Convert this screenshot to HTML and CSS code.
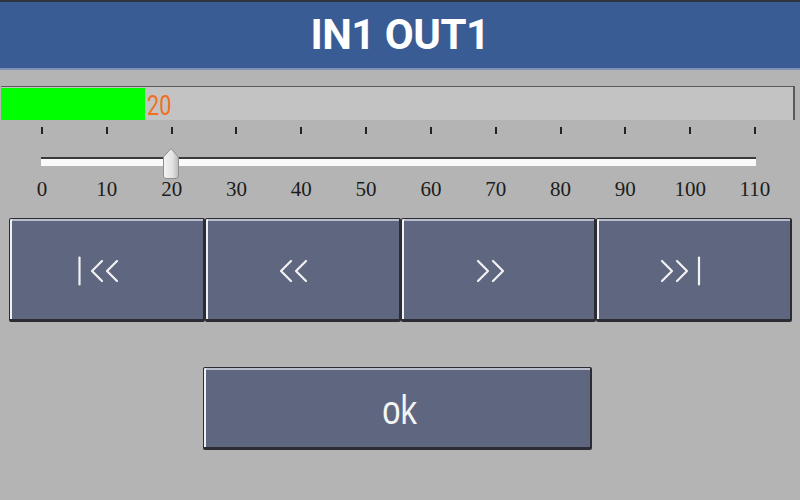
FILE: index.html
```html
<!DOCTYPE html>
<html lang="en">
<head>
    <meta charset="UTF-8">
    <title>IN1 OUT1</title>
    <link rel="stylesheet" href="styles.css">
</head>
<body>

<div class="panel">
    <div class="title-bar">IN1 OUT1</div>

    <div class="level">
        <div class="level-box">
            <div class="level-fill"></div>
            <span class="level-value">20</span>
        </div>
    </div>

    <div class="scale">
        <div class="ticks" id="ticks"></div>
        <div class="track">
            <div class="thumb">
                <svg width="18" height="33" viewBox="0 0 18 33">
                    <defs>
                        <linearGradient id="tg" x1="0" y1="0" x2="1" y2="0">
                            <stop offset="0" stop-color="#f4f4f4"/>
                            <stop offset="0.6" stop-color="#e2e2e2"/>
                            <stop offset="1" stop-color="#b9b9b9"/>
                        </linearGradient>
                    </defs>
                    <path d="M1.5 10 L9 1.5 L16.5 10 L16.5 29 Q16.5 31.5 14 31.5 L4 31.5 Q1.5 31.5 1.5 29 Z" fill="url(#tg)" stroke="#8e8e8e" stroke-width="1"/>
                </svg>
            </div>
        </div>
        <div class="labels" id="labels"></div>
    </div>

    <div class="nav-row">
        <button class="nav-btn">
            <svg width="41" height="30" viewBox="0 0 41 30" fill="none" stroke="#f2f2f2" stroke-width="2.2" stroke-linecap="round" stroke-linejoin="round">
                <line x1="1.5" y1="1.5" x2="1.5" y2="28.5"/>
                <polyline points="24,5 14,15 24,25"/>
                <polyline points="39,5 29,15 39,25"/>
            </svg>
        </button>
        <button class="nav-btn">
            <svg width="28" height="30" viewBox="0 0 28 30" fill="none" stroke="#f2f2f2" stroke-width="2.2" stroke-linecap="round" stroke-linejoin="round">
                <polyline points="11,5 1,15 11,25"/>
                <polyline points="26,5 16,15 26,25"/>
            </svg>
        </button>
        <button class="nav-btn">
            <svg width="28" height="30" viewBox="0 0 28 30" fill="none" stroke="#f2f2f2" stroke-width="2.2" stroke-linecap="round" stroke-linejoin="round">
                <polyline points="2,5 12,15 2,25"/>
                <polyline points="17,5 27,15 17,25"/>
            </svg>
        </button>
        <button class="nav-btn last">
            <svg width="41" height="30" viewBox="0 0 41 30" fill="none" stroke="#f2f2f2" stroke-width="2.2" stroke-linecap="round" stroke-linejoin="round">
                <polyline points="2,5 12,15 2,25"/>
                <polyline points="17,5 27,15 17,25"/>
                <line x1="39" y1="1.5" x2="39" y2="28.5"/>
            </svg>
        </button>
    </div>

    <div class="ok-row">
        <button class="ok-btn"><span>ok</span></button>
    </div>
</div>

<script>
    const ticks = document.getElementById("ticks");
    const labels = document.getElementById("labels");

    // 0 .. 110, step 10
    for (let v = 0; v <= 110; v += 10) {
        const tick = document.createElement("div");
        tick.classList.add("tick");
        ticks.appendChild(tick);

        const label = document.createElement("div");
        label.classList.add("label");
        label.innerHTML = "<span>" + v + "</span>";
        labels.appendChild(label);
    }
</script>

</body>
</html>
```

FILE: styles.css
```css
body {
    margin: 0;
    background-color: #b4b4b4;
    font-family: Roboto, "Liberation Sans", sans-serif;
}
.panel {
    width: 800px;
    height: 500px;
    overflow: hidden;
}
.title-bar {
    height: 66px;
    line-height: 66px;
    background-color: #3a5c94;
    border-top: 2px solid #2f3440;
    border-bottom: 2px solid #8092b4;
    color: #fff;
    text-align: center;
    font-size: 42px;
    font-weight: bold;
    letter-spacing: -0.5px;
}
.level {
    margin-top: 16px;
    padding-left: 1px;
}
.level-box {
    width: 792px;
    height: 33px;
    background-color: #c3c3c3;
    border-top: 1px solid #5a5a5a;
    border-right: 2px solid #5a5a5a;
    display: flex;
    align-items: center;
}
.level-fill {
    width: 144px;
    height: 32px;
    margin-top: 1px;
    background-color: #00ff00;
}
.level-value {
    display: inline-block;
    color: #f07020;
    font-size: 27px;
    transform: scaleX(0.8);
    transform-origin: left center;
    margin-left: 2px;
    margin-top: 5px;
}
.scale {
    margin-left: 41px;
    width: 715px;
}
.ticks {
    display: flex;
    justify-content: space-between;
    margin-top: 7px;
    height: 7px;
}
.tick {
    width: 2px;
    height: 7px;
    background-color: #222;
}
.track {
    position: relative;
    margin-top: 23px;
    height: 7px;
    border-top: 2px solid #3a3a3a;
    background-color: #fafafa;
}
.thumb {
    position: absolute;
    left: 121px;
    top: -12px;
    height: 33px;
}
.labels {
    display: flex;
    justify-content: space-between;
    margin-top: 12px;
    height: 22px;
}
.label {
    width: 2px;
    display: flex;
    justify-content: center;
    font-family: "Liberation Serif", serif;
    font-size: 21px;
    line-height: 22px;
    color: #1c1c1c;
}
.label span {
    white-space: nowrap;
}
.nav-row {
    display: grid;
    grid-template-columns: repeat(4, 1fr);
    margin: 18px 8px 0 9px;
    height: 104px;
}
.nav-btn, .ok-btn {
    background-color: #5f6680;
    border: 1px solid #2c2c34;
    border-bottom-width: 3px;
    border-right-width: 2px;
    box-shadow: inset 2px 0 0 #eef0f4, inset 0 2px 0 #b9bdcc;
    border-radius: 2px;
    padding: 0;
    margin: 0;
    display: flex;
    align-items: center;
    justify-content: center;
}
.nav-btn {
    padding: 4px 16px 0 0;
}
.nav-btn.last {
    padding-right: 26px;
}
.ok-row {
    margin-top: 45px;
    padding-left: 203px;
}
.ok-btn {
    width: 389px;
    height: 83px;
    color: #f4f4f4;
    font-size: 41px;
    padding-top: 6px;
    padding-left: 6px;
}
.ok-btn span {
    display: inline-block;
    transform: scaleX(0.8);
}
```
